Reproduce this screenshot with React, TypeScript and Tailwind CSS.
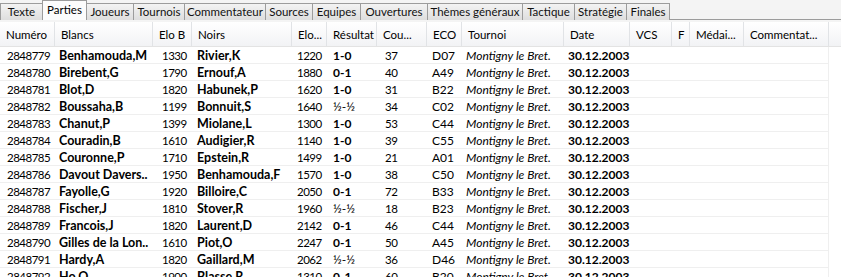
import React from 'react';

const tabs: [string, number][] = [
  ['Texte', 43], ['Parties', 45], ['Joueurs', 48], ['Tournois', 52], ['Commentateur', 82],
  ['Sources', 48], ['Equipes', 49], ['Ouvertures', 68], ['Thèmes généraux', 96],
  ['Tactique', 53], ['Stratégie', 53], ['Finales', 44],
];

const cols = [
  'Numéro', 'Blancs', 'Elo B', 'Noirs', 'Elo...', 'Résultat', 'Cou...', 'ECO',
  'Tournoi', 'Date', 'VCS', 'F', 'Médai...', 'Commentat...',
];

const games = [
  ['2848779', 'Benhamouda,M', '1330', 'Rivier,K', '1220', '1-0', '37', 'D07'],
  ['2848780', 'Birebent,G', '1790', 'Ernouf,A', '1880', '0-1', '40', 'A49'],
  ['2848781', 'Blot,D', '1820', 'Habunek,P', '1620', '1-0', '31', 'B22'],
  ['2848782', 'Boussaha,B', '1199', 'Bonnuit,S', '1640', '½-½', '34', 'C02'],
  ['2848783', 'Chanut,P', '1399', 'Miolane,L', '1300', '1-0', '53', 'C44'],
  ['2848784', 'Couradin,B', '1610', 'Audigier,R', '1140', '1-0', '39', 'C55'],
  ['2848785', 'Couronne,P', '1710', 'Epstein,R', '1499', '1-0', '21', 'A01'],
  ['2848786', 'Davout Davers..', '1950', 'Benhamouda,F', '1570', '1-0', '38', 'C50'],
  ['2848787', 'Fayolle,G', '1920', 'Billoire,C', '2050', '0-1', '72', 'B33'],
  ['2848788', 'Fischer,J', '1810', 'Stover,R', '1960', '½-½', '18', 'B23'],
  ['2848789', 'Francois,J', '1820', 'Laurent,D', '2142', '0-1', '46', 'C44'],
  ['2848790', 'Gilles de la Lon..', '1610', 'Piot,O', '2247', '0-1', '50', 'A45'],
  ['2848791', 'Hardy,A', '1820', 'Gaillard,M', '2062', '½-½', '36', 'D46'],
  ['2848792', 'Ho,O', '1900', 'Blasse,R', '1310', '0-1', '60', 'B20'],
];

const grid =
  'grid grid-cols-[55px_98px_39px_100px_35px_50px_50px_35px_102px_66px_42px_18px_54px_85px_1fr]';

// narrow digits, like the condensed numerals of the original grid font
const num = 'text-[11.5px] tracking-[-0.5px]';
const cell = 'border-b border-[#efefef] whitespace-nowrap overflow-hidden';

export default function App() {
  return (
    <div className="w-[841px] h-[277px] overflow-hidden bg-white font-['Lato',sans-serif]">
      {/* Tab strip */}
      <div className="h-[22px] bg-[#f4f4f4] relative">
        <div className="absolute left-0 right-0 top-[19px] h-px bg-[#9c9c9c]" />
        <div className="flex h-[20px] items-end relative">
          {tabs.map(([t, w]) =>
            t === 'Parties' ? (
              <div
                key={t}
                style={{ width: w }}
                className="h-[20px] -ml-px z-10 bg-[#fcfcfc] border border-b-0 border-[#9c9c9c] text-center text-[11.5px] leading-[17px] text-black"
              >
                {t}
              </div>
            ) : (
              <div
                key={t}
                style={{ width: w }}
                className="h-[17px] -ml-px first:ml-0 bg-gradient-to-b from-[#f3f3f3] to-[#dedede] border border-b-0 border-[#9c9c9c] text-center text-[11.5px] leading-[16px] text-[#111] whitespace-nowrap"
              >
                {t}
              </div>
            )
          )}
        </div>
      </div>

      {/* Header */}
      <div className={`${grid} h-[25px] bg-gradient-to-b from-white to-[#f2f3f5] border-b border-[#e3e3e3]`}>
        {cols.map((c) => (
          <div
            key={c}
            className="border-r border-[#e1e3e6] pl-[6px] text-[11.5px] leading-[25px] text-black whitespace-nowrap overflow-hidden"
          >
            {c}
          </div>
        ))}
        <div />
      </div>

      {/* Rows */}
      <div className="text-[12px] text-black">
        {games.map((g) => (
          <div key={g[0]} className={`${grid} h-[17px] leading-[17px]`}>
            <div className={`pl-[7px] ${num} ${cell}`}>{g[0]}</div>
            <div className={`pl-[4px] text-[12.5px] font-bold ${cell}`}>{g[1]}</div>
            <div className={`pl-[9px] ${num} ${cell}`}>{g[2]}</div>
            <div className={`pl-[5px] text-[12.5px] font-bold ${cell}`}>{g[3]}</div>
            <div className={`pl-[5px] ${num} ${cell}`}>{g[4]}</div>
            <div className={`pl-[6px] ${g[5] === '½-½' ? 'font-normal' : 'font-bold'} ${cell}`}>{g[5]}</div>
            <div className={`pl-[8px] ${num} ${cell}`}>{g[6]}</div>
            <div className={`pl-[5px] ${cell}`}>{g[7]}</div>
            <div className={`pl-[4px] italic ${cell}`}>Montigny le Bret.</div>
            <div className={`pl-[4px] font-bold ${cell}`}>30.12.2003</div>
            <div className={cell} />
            <div className={cell} />
            <div className={cell} />
            <div className={`${cell} border-r`} />
            <div />
          </div>
        ))}
      </div>
    </div>
  );
}
